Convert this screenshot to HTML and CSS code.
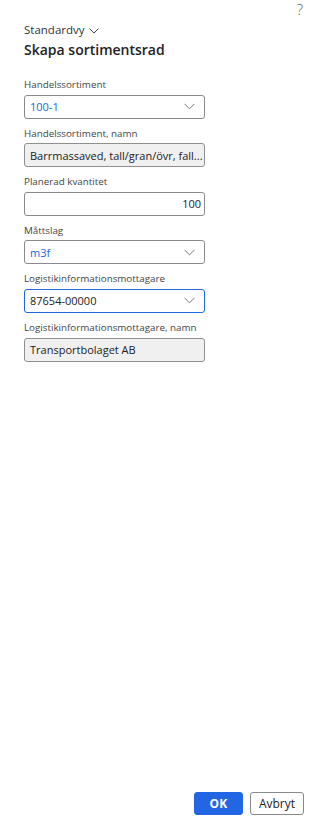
FILE: index.html
```html
<!DOCTYPE html>
<html>
<head>
<meta charset="utf-8">
<link rel="stylesheet" href="styles.css">
</head>
<body>
<div class="panel">
  <div class="topbar"><span class="help">?</span></div>
  <div class="header">
    <div class="view">Standardvy
      <svg class="view-chev" width="10" height="6" viewBox="0 0 10 6"><path d="M0.5 0.5 L5 5 L9.5 0.5" fill="none" stroke="#444" stroke-width="1"/></svg>
    </div>
    <h1 class="title">Skapa sortimentsrad</h1>
  </div>
  <div class="form">
    <div class="field">
      <label class="label">Handelssortiment</label>
      <div class="box">
        <span class="val link">100-1</span>
        <svg class="chev" width="11" height="7" viewBox="0 0 11 7"><path d="M0.5 0.8 L5.5 5.8 L10.5 0.8" fill="none" stroke="#777" stroke-width="1"/></svg>
      </div>
    </div>
    <div class="field">
      <label class="label">Handelssortiment, namn</label>
      <div class="box ro"><span class="val">Barrmassaved, tall/gran/övr, fall...</span></div>
    </div>
    <div class="field">
      <label class="label">Planerad kvantitet</label>
      <div class="box num"><span class="val">100</span></div>
    </div>
    <div class="field">
      <label class="label">Måttslag</label>
      <div class="box">
        <span class="val link">m3f</span>
        <svg class="chev" width="11" height="7" viewBox="0 0 11 7"><path d="M0.5 0.8 L5.5 5.8 L10.5 0.8" fill="none" stroke="#777" stroke-width="1"/></svg>
      </div>
    </div>
    <div class="field">
      <label class="label">Logistikinformationsmottagare</label>
      <div class="box focus">
        <span class="val">87654-00000</span>
        <svg class="chev" width="11" height="7" viewBox="0 0 11 7"><path d="M0.5 0.8 L5.5 5.8 L10.5 0.8" fill="none" stroke="#777" stroke-width="1"/></svg>
      </div>
    </div>
    <div class="field">
      <label class="label">Logistikinformationsmottagare, namn</label>
      <div class="box ro"><span class="val">Transportbolaget AB</span></div>
    </div>
  </div>
  <div class="footer">
    <button class="btn primary">OK</button>
    <button class="btn">Avbryt</button>
  </div>
</div>
</body>
</html>
```
FILE: styles.css
```css
* { box-sizing: border-box; }
html, body { margin: 0; padding: 0; background: #fff; }
body { font-family: "Open Sans", "Noto Sans", sans-serif; color: #222; }
.panel { width: 320px; height: 840px; display: flex; flex-direction: column; }
.topbar { height: 20px; display: flex; justify-content: flex-end; padding-right: 17px; }
.help { font-size: 15px; font-weight: 300; color: #555; line-height: 18px; margin-top: 0; }
.header { padding-left: 24px; }
.view { font-size: 11.5px; line-height: 16px; color: #333; display: flex; align-items: center; gap: 4px; margin-top: 2px; }
.view-chev { margin-top: 1px; }
.title { margin: 2px 0 0; font-size: 14px; font-weight: 600; line-height: 20px; color: #222; }
.form { padding: 18px 0 0 24px; display: flex; flex-direction: column; gap: 8px; }
.field { display: flex; flex-direction: column; }
.label { font-size: 9.8px; line-height: 14px; color: #444; margin-bottom: 2.6px; }
.box { width: 181px; height: 24px; border: 1px solid #8a8a8a; border-radius: 3px; display: flex; align-items: center; padding: 0 9px 0 5px; background: #fff; }
.box.ro { background: #f0f0f0; border-color: #8f8f8f; }
.box.num { justify-content: flex-end; padding-right: 3px; }
.box.focus { border-color: #2266e3; }
.val { font-size: 11px; color: #222; white-space: nowrap; flex: 1; }
.box.num .val { flex: none; }
.val.link { color: #2266e3; }
.chev { flex: none; }
.footer { margin-top: auto; display: flex; justify-content: flex-end; gap: 7px; padding: 0 16px 25px 0; }
.btn { font-family: "Open Sans", "Noto Sans", sans-serif; font-size: 12px; height: 23px; border-radius: 3px; border: 1px solid #8a8a8a; background: #fff; color: #222; padding: 0 8px; min-width: 54px; }
.btn.primary { background: #2266e3; border-color: #2266e3; color: #fff; font-weight: 700; min-width: 49px; }
```
